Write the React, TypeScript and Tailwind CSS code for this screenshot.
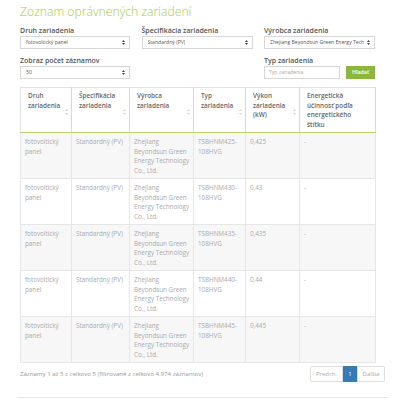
import React from "react";

const rows = [
  { typ: "TSBHNM425-108HVG", vykon: "0,425" },
  { typ: "TSBHNM430-108HVG", vykon: "0,43" },
  { typ: "TSBHNM435-108HVG", vykon: "0,435" },
  { typ: "TSBHNM440-108HVG", vykon: "0,44" },
  { typ: "TSBHNM445-108HVG", vykon: "0,445" },
];

const headers = [
  { label: "Druh zariadenia", w: "w-[51px]", sort: true },
  { label: "Špecifikácia zariadenia", w: "w-[58px]", sort: true },
  { label: "Výrobca zariadenia", w: "w-[64px]", sort: true },
  { label: "Typ zariadenia", w: "w-[52px]", sort: true },
  { label: "Výkon zariadenia (kW)", w: "w-[54px]", sort: true },
  { label: "Energetická účinnosť podľa energetického štítku", w: "w-[76px]", sort: false },
];

function SortIcon() {
  return (
    <svg width="3" height="6" viewBox="0 0 3 6" className="absolute right-[3px] top-[21px]">
      <path d="M1.5 0 L3 2 L0 2 Z M1.5 6 L3 4 L0 4 Z" fill="#d5d5d5" />
    </svg>
  );
}

function Select({ value }: { value: string }) {
  return (
    <div className="relative h-[13px] border border-[#d6d6d6] bg-white flex items-center pl-[5px] pr-[5px] text-[5.1px] text-[#555] whitespace-nowrap overflow-hidden">
      <span className="overflow-hidden">{value}</span>
      <svg width="3" height="5" viewBox="0 0 3 5" className="absolute right-[4px] top-[3px]">
        <path d="M1.5 0 L3 2 L0 2 Z M1.5 5 L3 3 L0 3 Z" fill="#444" />
      </svg>
    </div>
  );
}

export default function App() {
  return (
    <div className="w-[405px] h-[402px] bg-white overflow-hidden" style={{ fontFamily: '"Open Sans", "Liberation Sans", sans-serif' }}>
      <div className="px-[20px] pt-[2px]">
        <h1 className="text-[12.2px] font-light text-[#a8c94e] leading-[20px]">Zoznam oprávnených zariadení</h1>

        <div className="grid grid-cols-[110px_111px_111px] gap-x-[11.5px] mt-[3px]">
          <div>
            <div className="text-[7px] font-semibold text-[#555] leading-[11px]">Druh zariadenia</div>
            <Select value="fotovoltický panel" />
          </div>
          <div>
            <div className="text-[7px] font-semibold text-[#555] leading-[11px]">Špecifikácia zariadenia</div>
            <Select value="Standardný (PV)" />
          </div>
          <div>
            <div className="text-[7px] font-semibold text-[#555] leading-[11px]">Výrobca zariadenia</div>
            <Select value="Zhejiang Beyondsun Green Energy Tech" />
          </div>
          <div className="mt-[6px]">
            <div className="text-[7px] font-semibold text-[#555] leading-[11px]">Zobraz počet záznamov</div>
            <Select value="50" />
          </div>
          <div />
          <div className="mt-[6px]">
            <div className="text-[7px] font-semibold text-[#555] leading-[11px]">Typ zariadenia</div>
            <div className="flex gap-[6px]">
              <div className="w-[76px] h-[13px] border border-[#d6d6d6] flex items-center pl-[4px] text-[5.1px] text-[#aaa]">Typ zariadenia</div>
              <button className="flex-1 h-[13px] bg-[#8cb73d] text-white text-[5.3px] font-semibold flex items-center justify-center">Hľadať</button>
            </div>
          </div>
        </div>

        <table className="mt-[8px] w-[355px] border-collapse table-fixed border border-[#e2e2e2]">
          <thead>
            <tr>
              {headers.map((h, i) => (
                <th
                  key={i}
                  className={`${h.w} relative h-[45px] align-top text-left pl-[7px] pr-[6px] pt-[3px] text-[6.4px] leading-[9.6px] font-semibold text-[#666] border-b-[1.5px] border-b-[#b9d36e] border-r border-r-[#d3e4a0]`}
                >
                  {h.label}
                  {h.sort && <SortIcon />}
                </th>
              ))}
            </tr>
          </thead>
          <tbody>
            {rows.map((r, i) => (
              <tr key={i} className={i % 2 === 0 ? "bg-[#f7f7f7]" : "bg-white"}>
                {["fotovoltický panel", "Standardný (PV)", "Zhejiang Beyondsun Green Energy Technology Co., Ltd.", r.typ, r.vykon, "-"].map((c, j) => (
                  <td
                    key={j}
                    className="h-[46px] align-top pl-[4px] pr-[3px] pt-[4px] text-[6.3px] leading-[9.7px] text-[#aaa] border border-[#e6e6e6] break-words"
                  >
                    {c === r.typ ? (
                      <>
                        {c.split("-")[0]}-<br />
                        {c.split("-")[1]}
                      </>
                    ) : (
                      c
                    )}
                  </td>
                ))}
              </tr>
            ))}
          </tbody>
        </table>

        <div className="flex items-center justify-between mt-[3px]">
          <div className="text-[6.1px] text-[#999]">Záznamy 1 až 5 z celkovo 5 (filtrované z celkovo 4.974 záznamov)</div>
          <div className="flex h-[16px] text-[6px]">
            <div className="w-[33px] border border-[#ddd] rounded-l-[2px] flex items-center justify-center text-[#aaa]">Predch.</div>
            <div className="w-[14px] bg-[#337ab7] border border-[#337ab7] flex items-center justify-center text-white">1</div>
            <div className="w-[28px] border border-[#ddd] rounded-r-[2px] flex items-center justify-center text-[#aaa]">Ďalšia</div>
          </div>
        </div>
      </div>
      <div className="mx-[17px] mt-[15px] border-t border-[#e8e8e8]" />
    </div>
  );
}
